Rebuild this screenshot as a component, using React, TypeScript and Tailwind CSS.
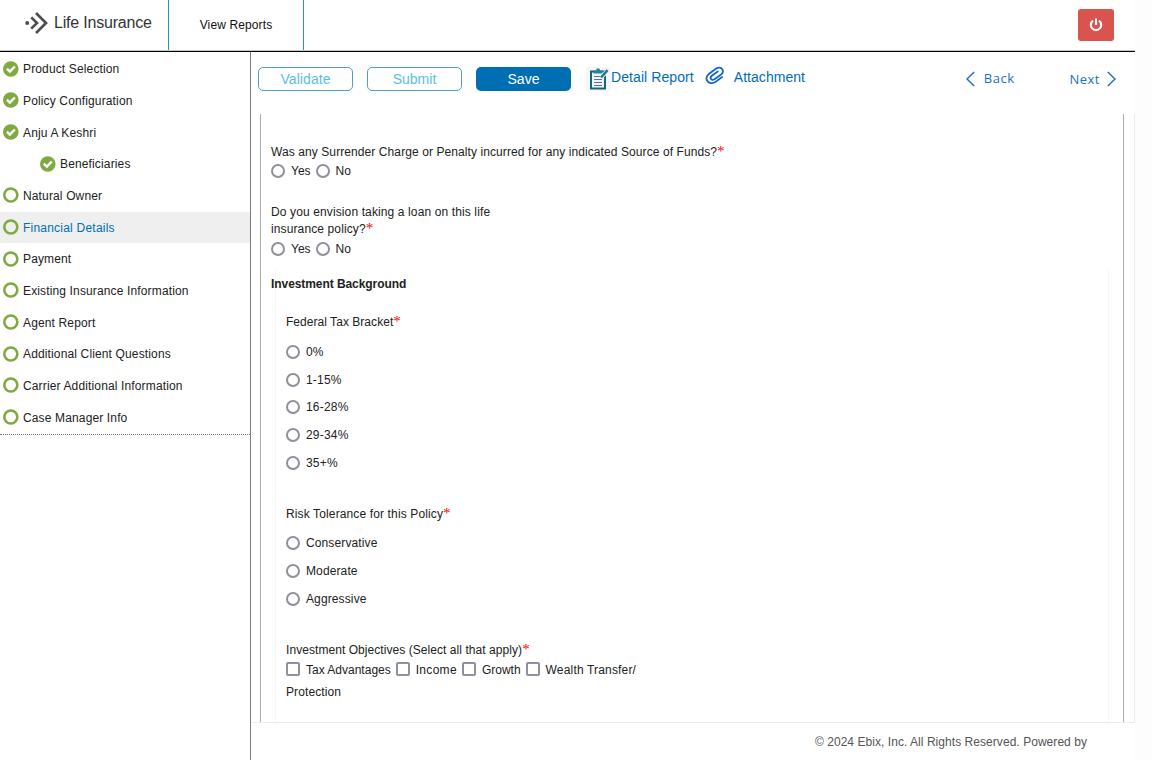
import React from "react";

const items = [
  { t: "Product Selection", done: true },
  { t: "Policy Configuration", done: true },
  { t: "Anju A Keshri", done: true },
  { t: "Beneficiaries", done: true, sub: true },
  { t: "Natural Owner" },
  { t: "Financial Details", active: true },
  { t: "Payment" },
  { t: "Existing Insurance Information" },
  { t: "Agent Report" },
  { t: "Additional Client Questions" },
  { t: "Carrier Additional Information" },
  { t: "Case Manager Info" },
];

function Status({ done }: { done?: boolean }) {
  return (
    <svg className="-mt-px h-4 w-4 shrink-0" viewBox="0 0 16 16" fill="none">
      {done ? (
        <>
          <circle cx="7.8" cy="8" r="7.8" fill="#7faa41" />
          <path d="M3.8 7.8 6.9 10.6 11.8 5.5" stroke="#fff" strokeWidth="2.5" />
        </>
      ) : (
        <circle cx="7.8" cy="8" r="6.5" stroke="#7faa41" strokeWidth="2.6" />
      )}
    </svg>
  );
}

function Radio({ label }: { label: string }) {
  return (
    <label className="flex items-center">
      <span className="mr-[6px] h-[14px] w-[14px] shrink-0 rounded-full border-2 border-[#8f8f9d] bg-white" />
      <span>{label}</span>
    </label>
  );
}

function Check({ label }: { label: string }) {
  return (
    <label className="flex items-center">
      <span className="mr-[6px] h-[14px] w-[14px] shrink-0 rounded-[2px] border-2 border-[#8f8f9d] bg-white" />
      <span className="pt-px">{label}</span>
    </label>
  );
}

function Star() {
  return (
    <span className="text-[15px] leading-none tracking-normal text-[#f00] font-['Liberation_Serif',serif]">
      *
    </span>
  );
}

function YesNo() {
  return (
    <div className="flex h-5 items-center gap-[5px]">
      <Radio label="Yes" />
      <Radio label="No" />
    </div>
  );
}

export default function App() {
  return (
    <div className="flex h-[760px] w-[1152px] overflow-hidden bg-[#fdfdfd] text-[12px] text-[#212121] font-['Liberation_Sans',Arial,sans-serif]">
      <div className="flex w-[1135px] flex-col bg-white">
        <header className="flex h-[52px] shrink-0 border-b border-black">
          <div className="flex h-full w-full border-b border-[#c8c8c8]">
            <div className="flex w-[169px] items-center border-r border-[#2a93cf] pb-1 pl-[25px]">
              <svg className="h-[22px] w-[23px]" viewBox="0 0 23 22" fill="none" stroke="#4d4d4d" strokeWidth="2.7">
                <circle cx="2.2" cy="11" r="2" fill="#4d4d4d" stroke="none" />
                <path d="M6.2 5.4 12 11 6.2 16.6" />
                <path d="M11 1 21 11 11 21" />
              </svg>
              <span className="ml-[6px] text-[16px] leading-5 tracking-[-0.2px] text-[#333]">Life Insurance</span>
            </div>
            <div className="flex w-[135px] items-center justify-center border-r border-[#2a93cf] text-[#111]">
              <span className="tracking-[0.12px]">View Reports</span>
            </div>
            <div className="flex flex-1 justify-end pr-[21px] pt-[9px]">
              <button className="flex h-8 w-9 items-center justify-center rounded-[3px] bg-[#d9534f]">
                <svg className="h-[14px] w-[14px]" viewBox="0 0 14 14" fill="none" stroke="#fff" strokeWidth="2.1">
                  <path d="M4 2.7A5.2 5.2 0 1 0 10 2.7M7 .4V7" />
                </svg>
              </button>
            </div>
          </div>
        </header>

        <div className="flex min-h-0 flex-1">
          <aside className="w-[251px] shrink-0 border-r border-[#7c7c7c] pt-[1.5px]">
            <nav className="border-b border-dotted border-[#777] pb-px">
              {items.map((i) => (
                <div
                  key={i.t}
                  className={`flex h-[31.67px] items-center gap-1 ${i.sub ? "pl-[40px]" : "pl-[3px]"} ${
                    i.active ? "bg-[#efefef] tracking-[0.22px] text-[#006eb3]" : "tracking-[0.14px]"
                  }`}
                >
                  <Status done={i.done} />
                  <span>{i.t}</span>
                </div>
              ))}
            </nav>
          </aside>

          <main className="flex min-w-0 flex-1 flex-col">
            <div className="flex h-[62px] shrink-0 items-start pl-[7px] pt-[15px] text-[14px] text-[#006eb3]">
              <button className="h-6 w-[95px] rounded-[5px] border border-[#4f9fd3] tracking-[0.08px] text-[#5bc0de]">Validate</button>
              <button className="ml-[14px] h-6 w-[95px] rounded-[5px] border border-[#4f9fd3] text-[#5bc0de]">Submit</button>
              <button className="ml-[14px] h-6 w-[95px] rounded-[5px] bg-[#006eb3] text-white">Save</button>
              <div className="ml-[15px] flex h-6 items-center bg-[#f5f7f8] pl-[3px] pr-[2px]">
                <svg className="h-6 w-5" viewBox="0 0 20 24" fill="none">
                  <rect x="2" y="4.5" width="14" height="17" fill="#eef5f7" stroke="#17647f" strokeWidth="2" />
                  <path d="M4.5 6.6V3.6h2.7C7.3.4 10.9.4 11 3.6h2.7v3z" fill="#2583a0" />
                  <path d="M5 9.5h7M5 12.5h8M5 15.5h8M5 18.5h8" stroke="#61717a" strokeWidth="1.2" />
                  <path d="M12 10.5 18.6 3.5" stroke="#eef5f7" strokeWidth="4.2" />
                  <path d="M12 10.5 18.6 3.2" stroke="#1e7897" strokeWidth="2.5" />
                </svg>
              </div>
              <span className="leading-5 tracking-[0.08px]">Detail Report</span>
              <svg className="-mt-px ml-[11px] h-5 w-5" viewBox="0 0 22 20" fill="none" stroke="#1267c5" strokeWidth="2" strokeLinecap="round">
                <path d="M18.8 11.2 12 16.2C8 19.3 3.3 17.8 2 14.6 1 12 2 9.5 4.5 7.6L12.4 1.8C15 0 18 .6 19.2 3c1.1 2.2.3 4-1.5 5.4L10.5 13.6C8.9 14.7 7.2 14.4 6.5 13.2 5.8 12 6.2 10.8 7.5 9.8L14 5.1" />
              </svg>
              <span className="ml-[9px] leading-5 tracking-[0.05px]">Attachment</span>
              <div className="ml-auto mr-[19px] flex items-center text-[13px] leading-6 text-[#1c6fc0] font-['Open_Sans',sans-serif]">
                <svg className="h-4 w-[9px]" viewBox="0 0 9 16" fill="none" stroke="#1c6fc0" strokeWidth="1.4">
                  <path d="M8.2 1 1 8l7.2 7" />
                </svg>
                <span className="-mt-0.5 ml-[9px] tracking-[0.5px]">Back</span>
                <span className="ml-[55px] tracking-[0.5px]">Next</span>
                <svg className="ml-[7px] h-4 w-[9px]" viewBox="0 0 9 16" fill="none" stroke="#1c6fc0" strokeWidth="1.4">
                  <path d="M.8 1 8 8 .8 15" />
                </svg>
              </div>
            </div>

            <div className="h-[609px] shrink-0 border-b border-r border-[#ececec] pl-[9px] pr-[10px]">
              <div className="h-full border-x border-[#a9a9a9] pl-[10px]">
                <div className="h-[155px] pt-[29px]">
                  <div className="h-[18px] leading-[18px] tracking-[0.088px]">
                    Was any Surrender Charge or Penalty incurred for any indicated Source of Funds?
                    <Star />
                  </div>
                  <YesNo />
                  <div className="mt-[22px] h-[36px] pt-px leading-[17px] tracking-[0.12px]">
                    Do you envision taking a loan on this life
                    <br />
                    <span>insurance policy?</span>
                    <Star />
                  </div>
                  <YesNo />
                </div>
                <div className="ml-[4px] mr-[14px] h-[453px] border-x border-[#f7f7f7] pl-[10px]">
                  <div className="-ml-[15px] pt-[6px] font-bold leading-[18px] tracking-[-0.07px]">Investment Background</div>
                  <div className="mt-5 h-[18px] leading-[18px] tracking-[0.04px]">
                    Federal Tax Bracket
                    <Star />
                  </div>
                  <div className="mt-[7px]">
                    {["0%", "1-15%", "16-28%", "29-34%", "35+%"].map((l) => (
                      <div key={l} className="flex h-[27.7px] items-center tracking-[0.2px]">
                        <Radio label={l} />
                      </div>
                    ))}
                  </div>
                  <div className="mt-[28.25px] h-[18px] leading-[18px] tracking-[0.13px]">
                    Risk Tolerance for this Policy
                    <Star />
                  </div>
                  <div className="mt-[6.75px]">
                    {["Conservative", "Moderate", "Aggressive"].map((l) => (
                      <div key={l} className="flex h-[27.75px] items-center tracking-[0.12px]">
                        <Radio label={l} />
                      </div>
                    ))}
                  </div>
                  <div className="mt-[28px] h-[18px] leading-[18px] tracking-[0.06px]">
                    Investment Objectives (Select all that apply)
                    <Star />
                  </div>
                  <div className="flex h-[21px] items-center gap-[5px]">
                    <Check label="Tax Advantages" />
                    <span className="tracking-[0.3px]">
                      <Check label="Income" />
                    </span>
                    <Check label="Growth" />
                    <span className="tracking-[0.17px]">
                      <Check label="Wealth Transfer/" />
                    </span>
                  </div>
                  <div className="mt-[3px] leading-[18px] tracking-[0.1px]">Protection</div>
                </div>
              </div>
            </div>
            <footer className="flex flex-1 items-center justify-end pr-[48px] text-[#555]">
              <span className="tracking-[0.05px]">© 2024 Ebix, Inc. All Rights Reserved. Powered by</span>
            </footer>
          </main>
        </div>
      </div>
    </div>
  );
}
